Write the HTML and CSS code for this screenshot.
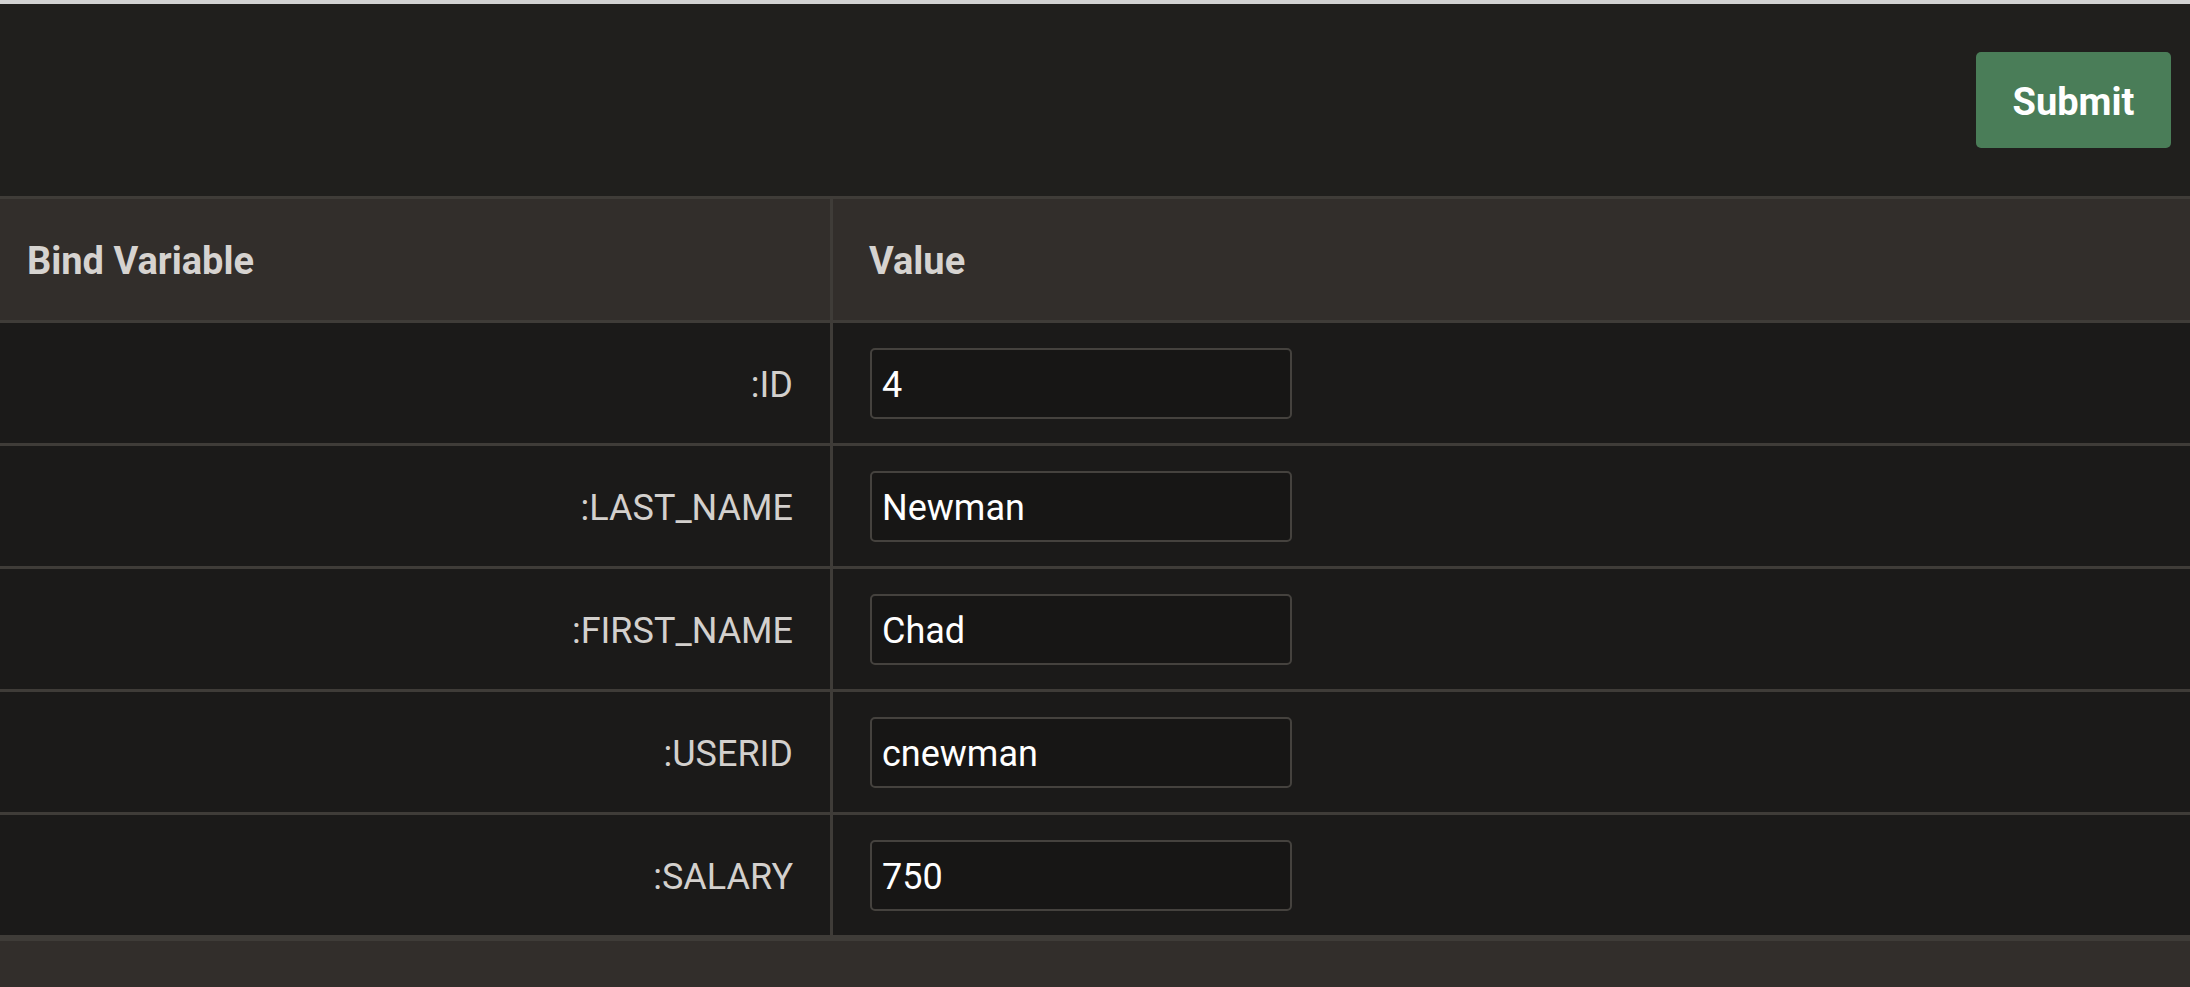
FILE: index.html
```html
<!DOCTYPE html>
<html>
<head>
<meta charset="utf-8">
<link rel="stylesheet" href="styles.css">
</head>
<body>
<div class="toolbar">
  <button class="btn-submit" type="button">Submit</button>
</div>
<table class="binds">
  <thead>
    <tr>
      <th class="col-name">Bind Variable</th>
      <th class="col-value">Value</th>
    </tr>
  </thead>
  <tbody>
    <tr><td class="col-name">:ID</td><td class="col-value"><input class="field" type="text" value="4"></td></tr>
    <tr><td class="col-name">:LAST_NAME</td><td class="col-value"><input class="field" type="text" value="Newman"></td></tr>
    <tr><td class="col-name">:FIRST_NAME</td><td class="col-value"><input class="field" type="text" value="Chad"></td></tr>
    <tr><td class="col-name">:USERID</td><td class="col-value"><input class="field" type="text" value="cnewman"></td></tr>
    <tr><td class="col-name">:SALARY</td><td class="col-value"><input class="field" type="text" value="750"></td></tr>
  </tbody>
</table>
<div class="footer"></div>
</body>
</html>
```

FILE: styles.css
```css
html, body {
  margin: 0;
  padding: 0;
  background: #322e2b;
  font-family: Roboto, "Open Sans", sans-serif;
}

.toolbar {
  height: 192px;
  border-top: 4px solid #d2d2d2;
  background: #201f1d;
  display: flex;
  justify-content: flex-end;
  align-items: center;
  padding-right: 19px;
}

.btn-submit {
  width: 195px;
  height: 96px;
  padding: 3px 0 0;
  border: none;
  border-radius: 5px;
  background: #4a7d58;
  color: #ffffff;
  font-family: inherit;
  font-weight: 700;
  font-size: 38px;
  cursor: pointer;
}

.binds {
  width: 100%;
  border-collapse: collapse;
  border-top: 3px solid #3f3c38;
  border-bottom: 6px solid #3f3c38;
}

.binds th {
  height: 118px;
  padding: 3px 0 0;
  background: #322e2b;
  color: #d6d3d0;
  font-weight: 700;
  font-size: 38px;
  text-align: left;
  border-bottom: 3px solid #3f3c38;
}

.binds th.col-name {
  width: 803px;
  padding-left: 27px;
  border-right: 3px solid #3f3c38;
}

.binds th.col-value {
  padding-left: 36px;
}

.binds td {
  height: 120px;
  padding: 0;
  background: #1b1a19;
  color: #d3d0cd;
  font-size: 36px;
  border-bottom: 3px solid #3f3c38;
}

.binds tbody tr:last-child td {
  border-bottom: none;
}

.binds td.col-name {
  height: 117px;
  padding-top: 3px;
  text-align: right;
  padding-right: 37px;
  border-right: 3px solid #3f3c38;
}

.binds td.col-value {
  padding-left: 37px;
}

.field {
  display: block;
  box-sizing: border-box;
  width: 422px;
  height: 71px;
  margin: 0;
  padding: 3px 10px 0;
  border: 2px solid #45423e;
  border-radius: 5px;
  background: #171615;
  color: #ffffff;
  font-family: inherit;
  font-size: 36px;
  outline: none;
}

.footer {
  height: 60px;
  background: #322e2b;
}
```
